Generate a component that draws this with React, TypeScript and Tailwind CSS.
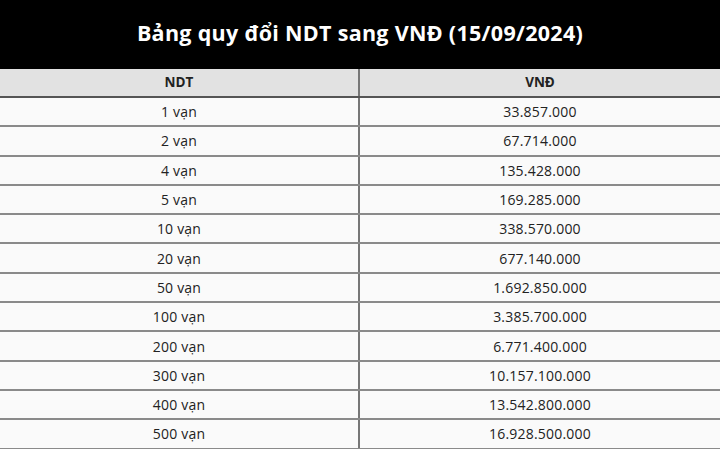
const rows: [string, string][] = [
  ['1 vạn', '33.857.000'],
  ['2 vạn', '67.714.000'],
  ['4 vạn', '135.428.000'],
  ['5 vạn', '169.285.000'],
  ['10 vạn', '338.570.000'],
  ['20 vạn', '677.140.000'],
  ['50 vạn', '1.692.850.000'],
  ['100 vạn', '3.385.700.000'],
  ['200 vạn', '6.771.400.000'],
  ['300 vạn', '10.157.100.000'],
  ['400 vạn', '13.542.800.000'],
  ['500 vạn', '16.928.500.000'],
];

const App = () => {
  return (
    <div className="w-[720px] h-[449px] overflow-hidden bg-[#fafafa] font-['Open_Sans',sans-serif] text-[#222]">
      {/* Title */}
      <div className="h-[69px] bg-black flex items-center justify-center">
        <h1 className="text-white text-[21.5px] font-bold tracking-[0.3px] pb-[2px]">
          Bảng quy đổi NDT sang VNĐ (15/09/2024)
        </h1>
      </div>

      {/* Header row */}
      <div className="grid grid-cols-2 h-[29px] bg-[#e2e2e2] border-b-2 border-[#555] text-[13.5px] font-bold">
        <div className="flex items-center justify-center border-r-2 border-[#777]">NDT</div>
        <div className="flex items-center justify-center">VNĐ</div>
      </div>

      {/* Body */}
      {rows.map(([ndt, vnd]) => (
        <div
          key={ndt}
          className="grid grid-cols-2 h-[29.3px] border-b-2 border-[#8a8a8a] text-[14px] tracking-[0.2px]"
        >
          <div className="flex items-center justify-center border-r-2 border-[#777]">{ndt}</div>
          <div className="flex items-center justify-center">{vnd}</div>
        </div>
      ))}
    </div>
  );
};

export default App;
